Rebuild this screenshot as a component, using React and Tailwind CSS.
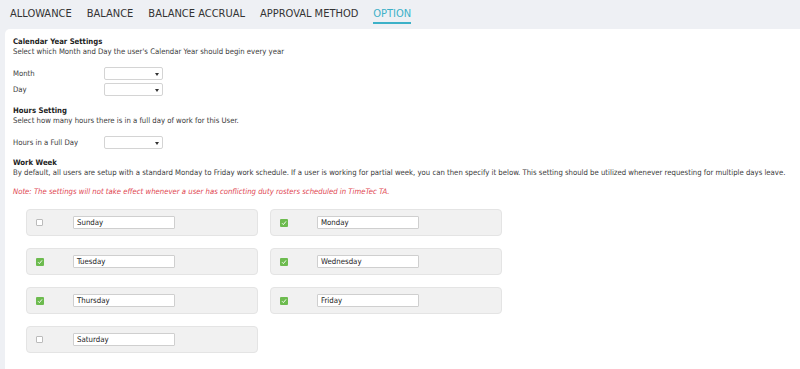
const tabs = ['ALLOWANCE', 'BALANCE', 'BALANCE ACCRUAL', 'APPROVAL METHOD', 'OPTION'];

const days = [
  { name: 'Sunday', on: false },
  { name: 'Monday', on: true },
  { name: 'Tuesday', on: true },
  { name: 'Wednesday', on: true },
  { name: 'Thursday', on: true },
  { name: 'Friday', on: true },
  { name: 'Saturday', on: false },
];

function Select() {
  return (
    <div className="relative w-[59px] h-[13px] bg-white border border-[#d4d4d4] rounded-[2px]">
      <span className="absolute right-[3px] top-[5px] w-0 h-0 border-l-[2px] border-r-[2px] border-t-[3px] border-l-transparent border-r-transparent border-t-[#333]"></span>
    </div>
  );
}

function Check({ on }) {
  if (!on) {
    return <div className="w-[7px] h-[7px] border border-[#bbb] bg-white rounded-[1px]"></div>;
  }
  return (
    <div className="w-[8px] h-[8px] bg-[#6dbb4f] rounded-[1px] flex items-center justify-center">
      <svg width="6" height="6" viewBox="0 0 6 6">
        <path d="M1 3.2 L2.4 4.6 L5 1.4" fill="none" stroke="#fff" strokeWidth="0.9" />
      </svg>
    </div>
  );
}

function DayCard({ day }) {
  return (
    <div className="w-[232px] h-[27px] bg-[#f1f1f1] border border-[#e4e4e4] rounded-[4px] flex items-center">
      <div className="w-[46px] pl-[9px] flex items-center">
        <Check on={day.on} />
      </div>
      <div className="w-[102px] h-[13px] bg-white border border-[#cfcfcf] rounded-[1px] flex items-center pl-[3px] text-[7.8px] text-[#222]">
        {day.name}
      </div>
    </div>
  );
}

export default function App() {
  return (
    <div
      className="w-[800px] h-[369px] bg-[#eef0f4] flex flex-col overflow-hidden"
      style={{ fontFamily: '"DejaVu Sans Condensed", "DejaVu Sans", sans-serif' }}
    >
      {/* Tabs */}
      <div className="h-[29px] flex items-start pl-[10px] gap-[15px] shrink-0">
        {tabs.map((t) => (
          <div key={t} className="flex flex-col items-center pt-[7px]">
            <span className={`text-[11px] leading-[14px] ${t === 'OPTION' ? 'text-[#3cb1c8]' : 'text-[#333]'}`}>
              {t}
            </span>
            {t === 'OPTION' && <span className="w-full h-[2px] bg-[#3cb1c8] mt-[1px]"></span>}
          </div>
        ))}
      </div>

      {/* Content */}
      <div className="flex-1 ml-[5px] bg-white rounded-tl-[5px] pl-[8px] pt-[8px] text-[7.7px] leading-[10px] text-[#3a3a3a]">
        <div className="font-semibold text-[#222]">Calendar Year Settings</div>
        <div>Select which Month and Day the user's Calendar Year should begin every year</div>

        <div className="mt-[10px] flex items-center">
          <span className="w-[91px]">Month</span>
          <Select />
        </div>
        <div className="mt-[3px] flex items-center">
          <span className="w-[91px]">Day</span>
          <Select />
        </div>

        <div className="mt-[10px] font-semibold text-[#222]">Hours Setting</div>
        <div>Select how many hours there is in a full day of work for this User.</div>

        <div className="mt-[10px] flex items-center">
          <span className="w-[91px]">Hours in a Full Day</span>
          <Select />
        </div>

        <div className="mt-[9px] font-semibold text-[#222]">Work Week</div>
        <div className="whitespace-nowrap">
          By default, all users are setup with a standard Monday to Friday work schedule. If a user is working for partial week, you can then specify it below. This setting should be utilized whenever requesting for multiple days leave.
        </div>
        <div className="mt-[9px] italic text-[#e0454f]">
          Note: The settings will not take effect whenever a user has conflicting duty rosters scheduled in TimeTec TA.
        </div>

        <div className="mt-[12px] ml-[13px] grid grid-cols-[232px_232px] gap-x-[12px] gap-y-[12px]">
          {days.map((d) => (
            <DayCard key={d.name} day={d} />
          ))}
        </div>
      </div>
    </div>
  );
}
